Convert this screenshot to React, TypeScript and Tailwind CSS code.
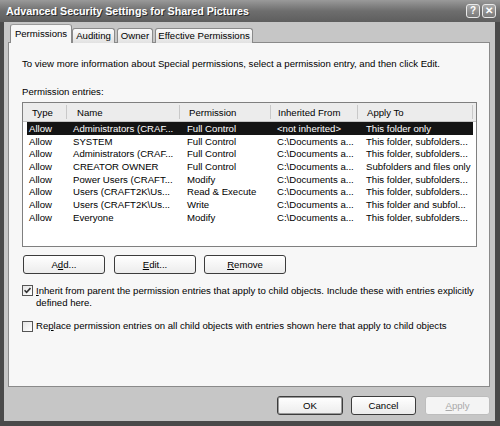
import React from 'react';

const rows: string[][] = [
  ['Allow', 'Administrators (CRAF...', 'Full Control', '<not inherited>', 'This folder only'],
  ['Allow', 'SYSTEM', 'Full Control', 'C:\\Documents a...', 'This folder, subfolders...'],
  ['Allow', 'Administrators (CRAF...', 'Full Control', 'C:\\Documents a...', 'This folder, subfolders...'],
  ['Allow', 'CREATOR OWNER', 'Full Control', 'C:\\Documents a...', 'Subfolders and files only'],
  ['Allow', 'Power Users (CRAFT...', 'Modify', 'C:\\Documents a...', 'This folder, subfolders...'],
  ['Allow', 'Users (CRAFT2K\\Us...', 'Read & Execute', 'C:\\Documents a...', 'This folder, subfolders...'],
  ['Allow', 'Users (CRAFT2K\\Us...', 'Write', 'C:\\Documents a...', 'This folder and subfol...'],
  ['Allow', 'Everyone', 'Modify', 'C:\\Documents a...', 'This folder, subfolders...'],
];

export default function App() {
  return (
    <div className="w-[500px] h-[426px] flex flex-col bg-[#4a4a4a] font-['Liberation_Sans',Arial,sans-serif] text-[9.6px] text-black select-none">
      {/* Title bar */}
      <div className="h-[22px] shrink-0 flex items-center pl-[6px] pr-[4px] bg-gradient-to-b from-[#9a9a9a] via-[#6e6e6e] to-[#5e5e5e]">
        <span className="flex-1 text-white font-bold text-[10.7px] [text-shadow:1px_1px_#2e2e2e]">
          Advanced Security Settings for Shared Pictures
        </span>
        <TitleButton>?</TitleButton>
        <TitleButton>✕</TitleButton>
      </div>

      {/* Body */}
      <div className="flex-1 flex flex-col bg-[#c6c6c6] ml-[4px] mr-[5px] mb-[5px] pl-[4px] pr-[5px] pt-[3px]">
        {/* Tabs */}
        <div className="h-[18px] flex items-end pl-[2px] relative z-10 -mb-px">
          <Tab active w="w-[62px]">Permissions</Tab>
          <Tab w="w-[43px]">Auditing</Tab>
          <Tab w="w-[36px] ml-[2px]">Owner</Tab>
          <Tab w="w-[98px] ml-[2px]">Effective Permissions</Tab>
        </div>

        {/* Panel */}
        <div className="h-[345px] shrink-0 border border-[#8a8a8a] bg-[#f7f7f7] px-[13px] pt-[14px] leading-[13px]">
          <p>To view more information about Special permissions, select a permission entry, and then click Edit.</p>
          <p className="mt-[15px]">Permission entries:</p>

          {/* List */}
          <div className="mt-[4px] w-[455px] h-[145px] border border-[#7f7f7f] bg-white">
            <div className="h-[19px] flex items-center bg-[#ececec] border-b border-[#c4c4c4]">
              <HeaderCell w="w-[44px]" pl="pl-[9px]">Type</HeaderCell>
              <HeaderCell w="w-[113px]" pl="pl-[10px]">Name</HeaderCell>
              <HeaderCell w="w-[91px]" pl="pl-[9px]">Permission</HeaderCell>
              <HeaderCell w="w-[87px]" pl="pl-[7px]">Inherited From</HeaderCell>
              <HeaderCell w="w-[115px]" pl="pl-[9px]">Apply To</HeaderCell>
            </div>
            <div className="pl-[4px]">
              {rows.map((r, i) => (
                <div
                  key={i}
                  className={
                    'h-[12.7px] w-[446px] flex items-center whitespace-nowrap ' +
                    (i === 0 ? 'bg-[#141414] text-white' : '')
                  }
                >
                  <span className="w-[40px] pl-[2px]">{r[0]}</span>
                  <span className="w-[113px] pl-[6px]">{r[1]}</span>
                  <span className="w-[91px] pl-[7px]">{r[2]}</span>
                  <span className="w-[87px] pl-[6px]">{r[3]}</span>
                  <span className="w-[115px] pl-[8px]">{r[4]}</span>
                </div>
              ))}
            </div>
          </div>

          {/* Add / Edit / Remove */}
          <div className="mt-[8px] flex pl-[1px]">
            <Button w="w-[82px]">
              A<u>d</u>d...
            </Button>
            <Button w="w-[82px] ml-[9px]">
              <u>E</u>dit...
            </Button>
            <Button w="w-[82px] ml-[8px]">
              <u>R</u>emove
            </Button>
          </div>

          {/* Checkboxes */}
          <div className="mt-[11px] flex items-start leading-[12px]">
            <Checkbox checked />
            <p className="ml-[3px] w-[442px]">
              <u>I</u>nherit from parent the permission entries that apply to child objects. Include these with entries explicitly defined here.
            </p>
          </div>
          <div className="mt-[11px] flex items-center leading-[12px]">
            <Checkbox />
            <p className="ml-[3px]">
              Re<u>p</u>lace permission entries on all child objects with entries shown here that apply to child objects
            </p>
          </div>
        </div>

        {/* Bottom buttons */}
        <div className="mt-[9px] flex justify-end leading-[13px]">
          <Button w="w-[66px] border-[#1e1e1e] shadow-[inset_0_0_0_1px_#9a9a9a]">OK</Button>
          <Button w="w-[65px] ml-[8px]">Cancel</Button>
          <Button w="w-[65px] ml-[9px]" disabled>
            <u>A</u>pply
          </Button>
        </div>
      </div>
    </div>
  );
}

function TitleButton({ children }: { children: React.ReactNode }) {
  return (
    <div className="w-[14px] h-[14px] ml-[2px] rounded-[3px] border border-[#e8e8e8] bg-gradient-to-b from-[#a8a8a8] to-[#7a7a7a] flex items-center justify-center text-white font-bold text-[10px] leading-none">
      {children}
    </div>
  );
}

function Tab({ children, active, w }: { children: React.ReactNode; active?: boolean; w: string }) {
  return (
    <div
      className={
        'flex items-center justify-center border border-b-0 rounded-t-[3px] whitespace-nowrap ' +
        w +
        (active
          ? ' h-[19px] bg-[#f7f7f7] border-[#8a8a8a] border-t-[#9a9a9a]'
          : ' h-[15px] bg-gradient-to-b from-[#fafafa] to-[#e2e2e2] border-[#8a8a8a]')
      }
    >
      {children}
    </div>
  );
}

function HeaderCell({ children, w, pl }: { children: React.ReactNode; w: string; pl: string }) {
  return (
    <div className={'h-[14px] flex items-center border-r border-[#c9c9c9] ' + w + ' ' + pl}>
      {children}
    </div>
  );
}

function Button({ children, w, disabled }: { children: React.ReactNode; w: string; disabled?: boolean }) {
  return (
    <div
      className={
        'h-[19px] flex items-center justify-center rounded-[3px] border ' +
        w +
        (disabled
          ? ' border-[#bdbdbd] bg-[#f4f4f4] text-[#a9a9a9]'
          : ' border-[#3c3c3c] bg-gradient-to-b from-white to-[#ececec]')
      }
    >
      <span>{children}</span>
    </div>
  );
}

function Checkbox({ checked }: { checked?: boolean }) {
  return (
    <div className="w-[11px] h-[11px] shrink-0 border border-[#555] bg-gradient-to-br from-[#e4e4e4] to-white flex items-center justify-center">
      {checked && (
        <svg width="7" height="7" viewBox="0 0 7 7">
          <path d="M0.5 3.2 L2.6 5.4 L6.5 1" fill="none" stroke="#333" strokeWidth="1.6" />
        </svg>
      )}
    </div>
  );
}
